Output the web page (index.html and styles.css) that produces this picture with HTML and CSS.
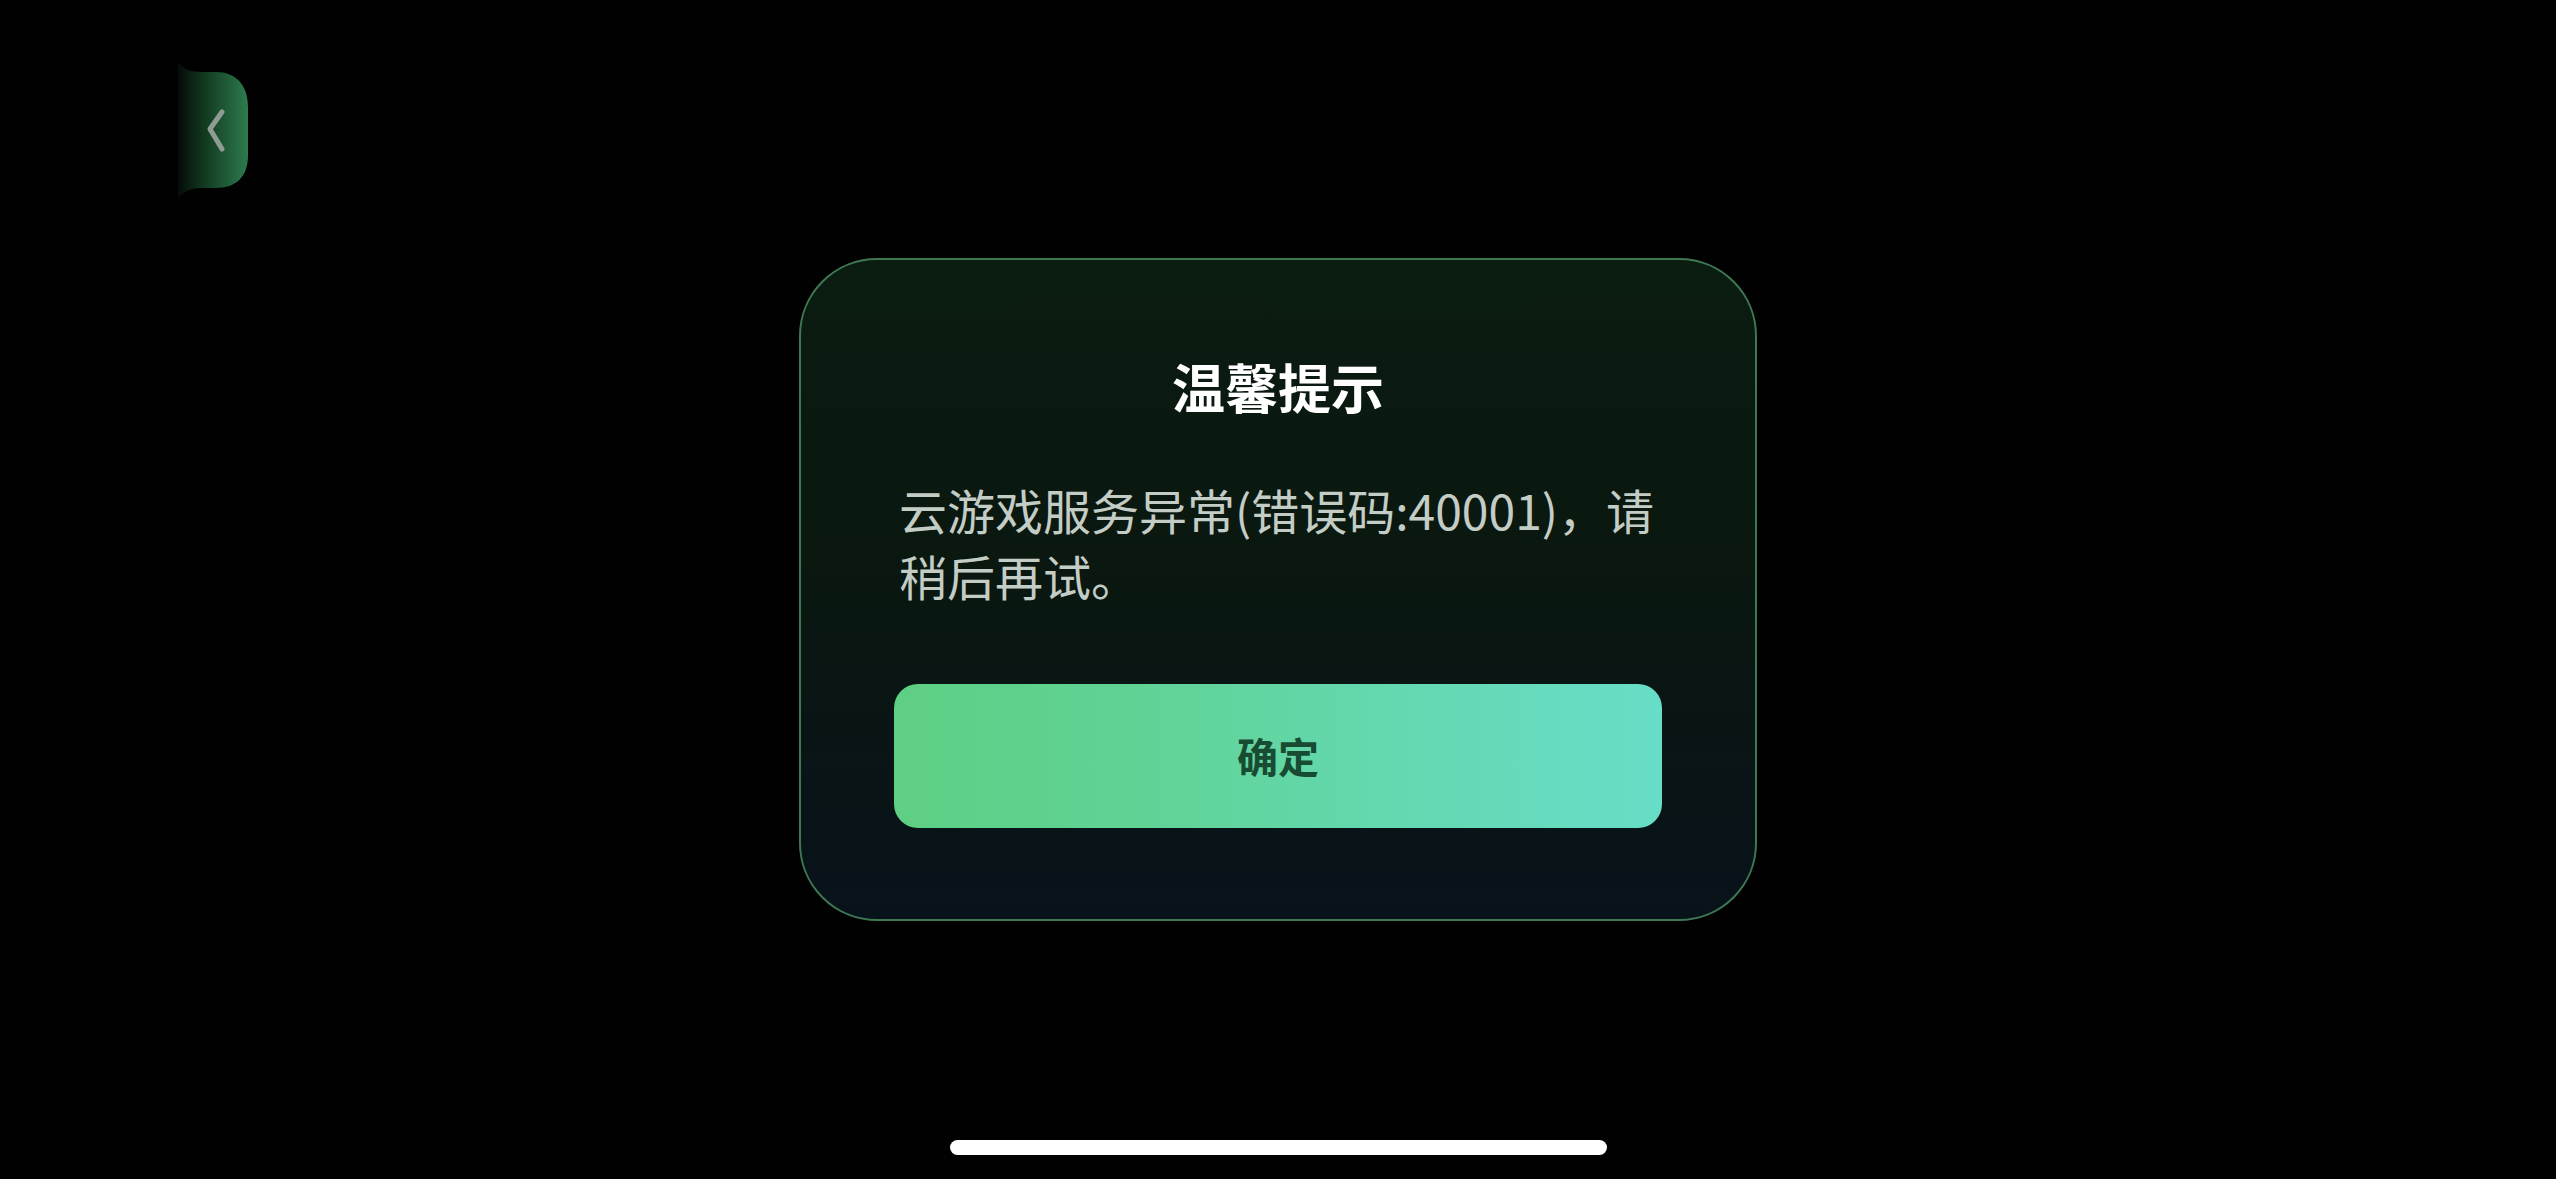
FILE: index.html
```html
<!DOCTYPE html>
<html lang="zh-CN">
<head>
<meta charset="utf-8">
<title>温馨提示</title>
<link rel="stylesheet" href="styles.css">
</head>
<body>
<div class="screen">
  <button class="back-tab" aria-label="返回">
    <svg class="back-shape" width="74" height="140" viewBox="0 0 74 140">
      <defs>
        <linearGradient id="tabGrad" x1="0" y1="0" x2="1" y2="0">
          <stop offset="0" stop-color="#050b08"/>
          <stop offset="0.35" stop-color="#12361f"/>
          <stop offset="1" stop-color="#2c7c4d"/>
        </linearGradient>
      </defs>
      <path d="M2,1 C6,8 14,11 26,11 L40,11 C60,11 72,24 72,46 L72,94 C72,116 60,127 40,127 L26,127 C14,127 6,131 2,138 Z" fill="url(#tabGrad)"/>
      <path d="M46,51 L34,68 L46,88" fill="none" stroke="#8f9c94" stroke-width="5" stroke-linecap="round" stroke-linejoin="round"/>
    </svg>
  </button>

  <div class="dialog">
    <h1 class="dialog-title">温馨提示</h1>
    <p class="dialog-message">云游戏服务异常(错误码:40001)，请稍后再试。</p>
    <button class="dialog-confirm">确定</button>
  </div>

  <div class="home-indicator"></div>
</div>
</body>
</html>
```
FILE: styles.css
```css
* {
  box-sizing: border-box;
}

html, body {
  margin: 0;
  padding: 0;
  background: #000;
}

body {
  font-family: "Noto Sans CJK SC", "Noto Sans", sans-serif;
}

.screen {
  position: relative;
  width: 2556px;
  height: 1179px;
  background: #010102;
  display: flex;
  align-items: center;
  justify-content: center;
  overflow: hidden;
}

.back-tab {
  position: absolute;
  left: 176px;
  top: 61px;
  width: 74px;
  height: 140px;
  padding: 0;
  margin: 0;
  border: none;
  background: none;
  display: block;
}

.back-shape {
  display: block;
}

.dialog {
  width: 958px;
  height: 663px;
  margin-top: -1px;
  border: 2px solid #3e7853;
  border-radius: 78px;
  background: linear-gradient(180deg, #0b1c11 0%, #0a1810 45%, #08121a 100%);
  padding: 90px 93px 91px;
  display: flex;
  flex-direction: column;
}

.dialog-title {
  margin: 0;
  font-size: 53px;
  line-height: 73px;
  font-weight: 700;
  color: #ffffff;
  text-align: center;
}

.dialog-message {
  margin: 53px 0 0;
  padding: 0 0 0 5px;
  font-size: 48px;
  line-height: 66px;
  font-weight: 400;
  color: #c3cdc6;
  text-align: left;
}

.dialog-confirm {
  margin-top: 76px;
  width: 768px;
  height: 144px;
  border: none;
  border-radius: 24px;
  background: linear-gradient(90deg, #5ecf83 0%, #60d294 30%, #64d8b0 65%, #68ddc7 100%);
  color: #174c32;
  font-family: "Noto Sans CJK SC", "Noto Sans", sans-serif;
  font-size: 41px;
  font-weight: 700;
  line-height: 1;
  padding: 0;
}

.home-indicator {
  position: absolute;
  left: 950px;
  top: 1140px;
  width: 657px;
  height: 15px;
  border-radius: 8px;
  background: #ffffff;
}
```
